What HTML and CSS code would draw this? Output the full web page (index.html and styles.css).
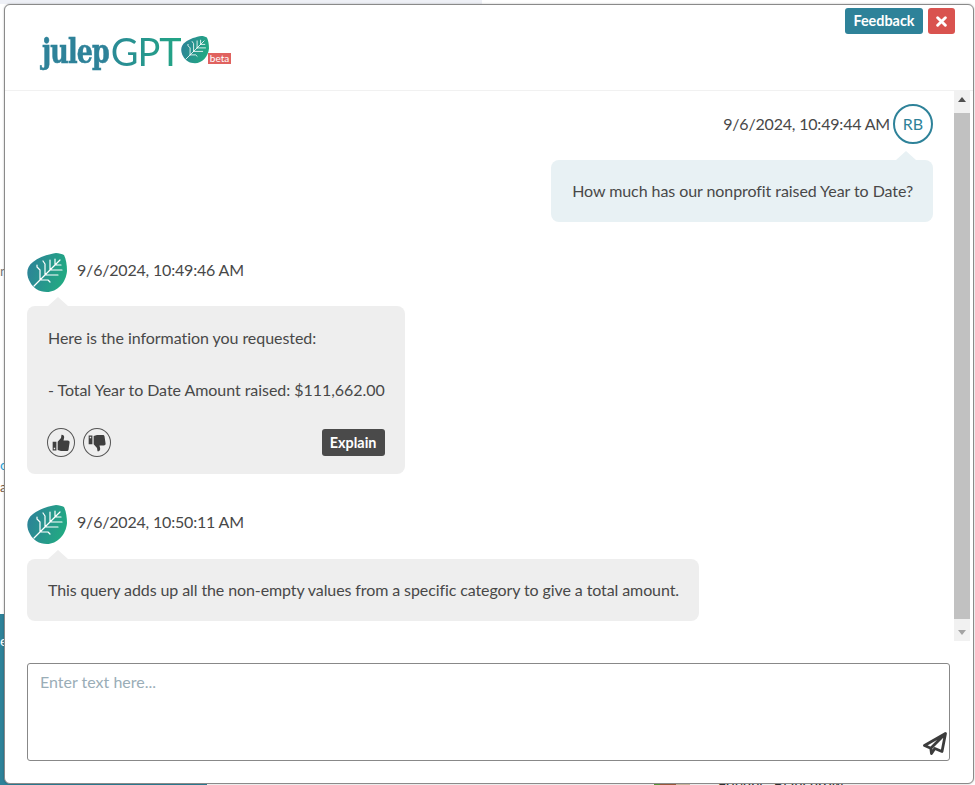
FILE: index.html
```html
<!DOCTYPE html>
<html lang="en">
<head>
    <meta charset="UTF-8">
    <meta name="viewport" content="width=device-width, initial-scale=1.0">
    <title>julepGPT</title>
    <link rel="stylesheet" href="styles.css">
</head>
<body>

    <div class="backdrop">
        <div class="backdrop-top"></div>
        <div class="backdrop-left">n</div>
        <div class="backdrop-left backdrop-link">o</div>
        <div class="backdrop-left backdrop-brown">a</div>
        <div class="backdrop-teal">e</div>
        <div class="backdrop-pic"></div>
        <div class="backdrop-name">Friends: Blanchrow</div>
    </div>

    <div class="dialog">
        <div class="dialog-head">
            <div class="logo">
                <span class="logo-julep">julep</span><span class="logo-gpt">GPT</span>
                <svg class="logo-leaf" viewBox="0 0 40 40">
                    <use href="#leaf"></use>
                </svg>
                <span class="logo-beta">beta</span>
            </div>
            <div class="head-btns">
                <button class="btn btn-feedback">Feedback</button>
                <button class="btn btn-close">
                    <svg viewBox="0 0 10 10"><path d="M1.500 1.500l7 7M8.500 1.500l-7 7" stroke="#fff" stroke-width="2.600" stroke-linecap="round"/></svg>
                </button>
            </div>
        </div>

        <div class="dialog-body">
            <div class="messages">
                <div class="msg msg-user">
                    <div class="msg-info">
                        <span class="msg-time">9/6/2024, 10:49:44 AM</span>
                        <span class="avatar-user">RB</span>
                    </div>
                    <div class="bubble bubble-user">How much has our nonprofit raised Year to Date?</div>
                </div>

                <div class="msg">
                    <div class="msg-info">
                        <svg class="avatar-bot" viewBox="0 0 40 40"><use href="#leaf"></use></svg>
                        <span class="msg-time">9/6/2024, 10:49:46 AM</span>
                    </div>
                    <div class="bubble bubble-answer">
                        <p>Here is the information you requested:</p>
                        <p class="gap">- Total Year to Date Amount raised: $111,662.00</p>
                        <div class="bubble-actions">
                            <button class="vote">
                                <svg viewBox="0 0 24 24"><use href="#thumb"></use></svg>
                            </button>
                            <button class="vote">
                                <svg class="flip" viewBox="0 0 24 24"><use href="#thumb"></use></svg>
                            </button>
                            <button class="btn btn-explain">Explain</button>
                        </div>
                    </div>
                </div>

                <div class="msg">
                    <div class="msg-info">
                        <svg class="avatar-bot" viewBox="0 0 40 40"><use href="#leaf"></use></svg>
                        <span class="msg-time">9/6/2024, 10:50:11 AM</span>
                    </div>
                    <div class="bubble bubble-tight">This query adds up all the non-empty values from a specific category to give a total amount.</div>
                </div>
            </div>

            <div class="scrollbar">
                <span class="arrow arrow-up"></span>
                <div class="scroll-thumb"></div>
                <span class="arrow arrow-down"></span>
            </div>
        </div>

        <div class="input-row">
            <textarea class="chat-input" placeholder="Enter text here..."></textarea>
            <svg class="send" viewBox="0 0 24 24">
                <path d="M22.500 1.500 1.500 13.500l6.300 2.700L22.500 1.500 19 19.500l-7.200-3-3.300 5-.7-5.300" fill="none" stroke="#3c3c3c" stroke-width="2.800" stroke-linejoin="round"/>
            </svg>
        </div>
    </div>

    <!-- shared icons -->
    <svg class="defs" width="0" height="0">
        <defs>
            <linearGradient id="leafGrad" x1="0" y1="0" x2="1" y2="0.3">
                <stop offset="0" stop-color="#2e7f9a"/>
                <stop offset="1" stop-color="#22a883"/>
            </linearGradient>
            <g id="leaf">
                <path d="M37 2C39 6 40 12 40 18 39 30 30 39 20 39 12 39 6 35 3 29-1 22-1 14 6 9 12 4 22 1 29 0 32 0 35 1 37 2Z" fill="url(#leafGrad)"/>
                <path d="M7 33 33 7M13 27V17L10 14V12M18 22V11L16 8M23 17V7M28 12V6M13 27H21L23 29M18 22H31M23 17H35M28 12H34" fill="none" stroke="#fff" stroke-width="1.200" stroke-linecap="round" stroke-linejoin="round"/>
            </g>
            <g id="thumb">
                <path fill-rule="evenodd" d="M2 10.500h4.500V21H2ZM3.300 17.800v1.700H5v-1.700ZM8 10.500l4-4.500.6-4c2.200-.2 3.400 1.500 3.200 3.500l-.8 3.500h5c1.500 0 2.500 1 2.300 2.400L21 20c-.2 1-1 1.500-2 1.500h-7c-1.500 0-2.500-1-4-1Z" fill="#3f3f3f"/>
            </g>
        </defs>
    </svg>

</body>
</html>
```

FILE: styles.css
```css
* {
    box-sizing: border-box;
}

body {
    margin: 0;
    height: 785px;
    overflow: hidden;
    background-color: #fff;
    font-family: Lato, "Open Sans", sans-serif;
    font-size: 16px;
    font-variant-ligatures: none;
    color: #484848;
}

p {
    margin: 0;
}

/* page behind the dialog */
.backdrop-top {
    position: absolute;
    left: 0;
    top: 0;
    width: 482px;
    height: 4px;
    background-color: #eef0f6;
}

.backdrop-left {
    position: absolute;
    left: 0;
    top: 262px;
    font-size: 14px;
    color: #777;
}

.backdrop-link {
    top: 456px;
    color: #2a9fd6;
}

.backdrop-brown {
    top: 478px;
    color: #7a5a3c;
}

.backdrop-teal {
    position: absolute;
    left: 0;
    top: 614px;
    width: 207px;
    height: 171px;
    padding-top: 18px;
    background-color: #2e8299;
    color: #fff;
    font-size: 14px;
}

.backdrop-pic {
    position: absolute;
    left: 654px;
    top: 781px;
    width: 36px;
    height: 4px;
    background: linear-gradient(90deg, #5f9e3a 0 18%, #a5603f 18% 60%, #d8c3a8 60%);
}

.backdrop-name {
    position: absolute;
    left: 718px;
    top: 775px;
    font-size: 15px;
    color: #333;
}

/* dialog */
.dialog {
    position: absolute;
    left: 4px;
    top: 4px;
    width: 970px;
    height: 780px;
    display: flex;
    flex-direction: column;
    background-color: #fff;
    border: 1px solid #8a8a8a;
    border-radius: 6px;
    box-shadow: 0 0 2px rgba(0,0,0,0.3);
}

.dialog-head {
    display: flex;
    justify-content: space-between;
    height: 86px;
    padding: 3px 18px 0 37px;
    border-bottom: 1px solid #f1f1f1;
}

.head-btns {
    display: flex;
    gap: 5px;
    height: 26px;
}

.btn {
    border: 0;
    border-radius: 3px;
    color: #fff;
    font-family: inherit;
    font-weight: 700;
    font-size: 14.400px;
    padding: 0;
}

.btn-feedback {
    width: 78px;
    padding-bottom: 2px;
    background-color: #2e8299;
}

.btn-close {
    display: flex;
    align-items: center;
    justify-content: center;
    width: 27px;
    background-color: #d9534f;
}

.btn-close svg {
    width: 11px;
    height: 11px;
}

.logo {
    display: flex;
    align-items: flex-start;
    position: relative;
    padding-top: 21px;
}

/* wordmark is narrower than any installed serif */
.logo-julep {
    display: inline-block;
    margin-right: -14px;
    font-family: "DejaVu Serif Condensed", "Liberation Serif", serif;
    font-weight: 700;
    font-size: 34px;
    line-height: 44px;
    letter-spacing: -1px;
    color: #2e8299;
    -webkit-text-stroke: 0.6px #2e8299;
    transform: scaleX(0.83);
    transform-origin: left center;
}

.logo-gpt {
    font-weight: 400;
    font-size: 38px;
    line-height: 44px;
    letter-spacing: -1px;
    margin-left: 2px;
    background: linear-gradient(90deg, #2a8a96, #22a585);
    -webkit-background-clip: text;
    background-clip: text;
    color: transparent;
}

.logo-leaf {
    width: 28px;
    height: 28px;
    margin-top: 7px;
}

.logo-beta {
    position: absolute;
    left: 166px;
    top: 45px;
    width: 23px;
    height: 11px;
    background-color: #e0625f;
    color: #fff;
    font-size: 10px;
    line-height: 11px;
    text-align: center;
}

.dialog-body {
    display: flex;
    height: 550px;
}

.messages {
    flex: 1;
    padding: 13px 21px 0 22px;
}

.msg {
    display: flex;
    flex-direction: column;
    align-items: flex-start;
    margin-bottom: 31px;
}

.msg-user {
    align-items: flex-end;
}

.msg-info {
    display: flex;
    align-items: flex-start;
    height: 40px;
    margin-bottom: 13px;
}

.msg-user .msg-info {
    align-items: center;
    margin-bottom: 16px;
}

.msg-time {
    line-height: 34px;
    letter-spacing: -0.190px;
}

.avatar-user {
    width: 40px;
    height: 40px;
    margin-left: 3px;
    border: 2px solid #2e8299;
    border-radius: 50%;
    color: #2e8299;
    line-height: 36px;
    text-align: center;
}

.avatar-bot {
    width: 40px;
    height: 40px;
    margin-right: 10px;
}

.bubble {
    position: relative;
    padding: 18px 20px 18px 21px;
    border-radius: 8px;
    background-color: #eee;
    line-height: 26px;
    letter-spacing: -0.050px;
}

.bubble-answer {
    padding-top: 19px;
    padding-bottom: 17px;
}

.bubble-tight {
    margin-top: 1px;
    letter-spacing: -0.100px;
}

/* little caret on top of the bubble */
.bubble::before {
    content: "";
    position: absolute;
    left: 21px;
    top: -9px;
    border-left: 10px solid transparent;
    border-right: 10px solid transparent;
    border-bottom: 9px solid #eee;
}

.bubble-user {
    background-color: #e8f1f4;
    letter-spacing: -0.070px;
}

.bubble-user::before {
    left: auto;
    right: 17px;
    border-bottom-color: #e8f1f4;
}

.gap {
    margin-top: 26px;
}

.bubble-actions {
    display: flex;
    align-items: center;
    gap: 8px;
    margin-top: 25px;
    margin-left: -1px;
}

.vote {
    display: flex;
    align-items: center;
    justify-content: center;
    width: 28px;
    height: 29px;
    padding: 0;
    border: 1px solid #555;
    border-radius: 50%;
    background-color: transparent;
}

.vote svg {
    width: 20px;
    height: 20px;
}

.vote .flip {
    transform: scaleY(-1);
}

.btn-explain {
    width: 63px;
    height: 27px;
    margin-left: auto;
    background-color: #4a4a4a;
}

/* scrollbar */
.scrollbar {
    display: flex;
    flex-direction: column;
    align-items: center;
    width: 16px;
    margin-right: 3px;
    background-color: #f1f1f1;
}

.arrow {
    flex: none;
    display: block;
    width: 0;
    border-left: 4px solid transparent;
    border-right: 4px solid transparent;
}

.arrow-up {
    margin: 6px 0;
    border-bottom: 5px solid #505050;
}

.arrow-down {
    margin: 6px 0;
    border-top: 5px solid #a3a3a3;
}

.scroll-thumb {
    flex: 1;
    width: 100%;
    margin: 5px 0;
    background-color: #c1c1c1;
}

.input-row {
    position: relative;
    padding: 22px 22px 0 22px;
}

.chat-input {
    display: block;
    width: 923px;
    height: 98px;
    padding: 8px 12px;
    border: 1px solid #888;
    border-radius: 3px;
    resize: none;
    font-family: inherit;
    font-size: 16px;
    line-height: 20px;
    color: #444;
}

.chat-input::placeholder {
    color: #9aadb7;
    opacity: 1;
}

.send {
    position: absolute;
    left: 918px;
    top: 91px;
    width: 24px;
    height: 24px;
}

.defs {
    position: absolute;
}
```
